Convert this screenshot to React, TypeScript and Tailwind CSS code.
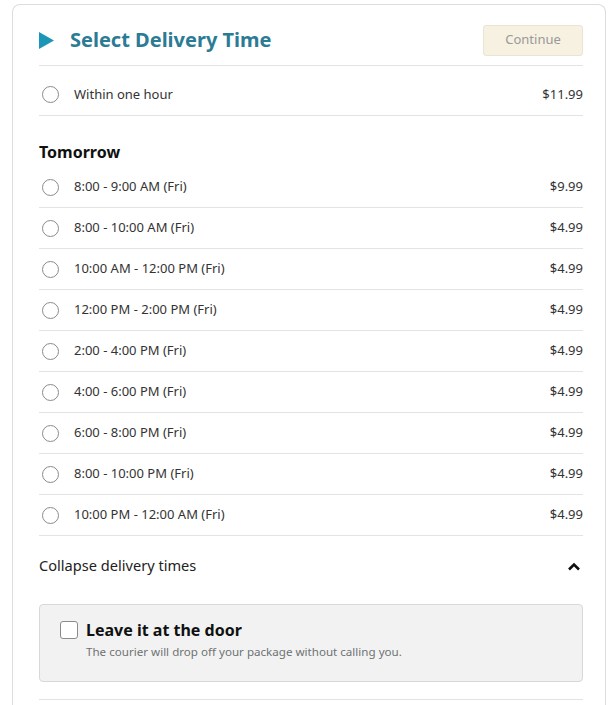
import { useState } from "react";

const SLOTS = [
  { label: "8:00 - 9:00 AM (Fri)", price: "$9.99" },
  { label: "8:00 - 10:00 AM (Fri)", price: "$4.99" },
  { label: "10:00 AM - 12:00 PM (Fri)", price: "$4.99" },
  { label: "12:00 PM - 2:00 PM (Fri)", price: "$4.99" },
  { label: "2:00 - 4:00 PM (Fri)", price: "$4.99" },
  { label: "4:00 - 6:00 PM (Fri)", price: "$4.99" },
  { label: "6:00 - 8:00 PM (Fri)", price: "$4.99" },
  { label: "8:00 - 10:00 PM (Fri)", price: "$4.99" },
  { label: "10:00 PM - 12:00 AM (Fri)", price: "$4.99" },
];

function Radio({ checked }: { checked: boolean }) {
  return (
    <span
      className={`w-[17px] h-[17px] rounded-full border bg-white shrink-0 flex items-center justify-center ${
        checked ? "border-[#007185]" : "border-[#888c8c]"
      }`}
    >
      {checked && <span className="w-[7px] h-[7px] rounded-full bg-[#007185]" />}
    </span>
  );
}

export default function App() {
  const [selected, setSelected] = useState<string | null>(null);
  const [leave, setLeave] = useState(false);

  return (
    <div
      className="min-h-[705px] bg-white pt-[4px] pl-[12px] pr-[7px] text-[#333333]"
      style={{ fontFamily: '"Noto Sans", "Open Sans", Arial, sans-serif' }}
    >
      <div className="border border-[#dddddd] rounded-t-[8px] border-b-0 pl-[26px] pr-[22px] pb-[5px]">
        {/* Header */}
        <div className="h-[61px] pt-[10px] flex items-center justify-between border-b border-[#e3e3e3]">
          <div className="flex items-center gap-[16px]">
            <svg width="15" height="17" viewBox="0 0 15 17" className="mt-[1px]">
              <polygon points="0,0 15,8.5 0,17" fill="#1c96b7" />
            </svg>
            <h2 className="text-[20px] font-bold text-[#2b7b95]">
              Select Delivery Time
            </h2>
          </div>
          <button className="w-[100px] h-[31px] rounded-[3px] border border-[#ece4d0] bg-[#f7f1e1] text-[13px] text-[#999999]">
            Continue
          </button>
        </div>

        {/* Within one hour */}
        <label
          className="h-[50px] pt-[8px] flex items-center border-b border-[#e3e3e3] cursor-pointer"
          onClick={() => setSelected("hour")}
        >
          <span className="ml-[3px]">
            <Radio checked={selected === "hour"} />
          </span>
          <span className="ml-[15px] text-[13px] flex-1">Within one hour</span>
          <span className="text-[13px]">$11.99</span>
        </label>

        <h3 className="text-[16px] font-bold text-[#0f1111] mt-[25px] mb-[4px] leading-[22px]">Tomorrow</h3>

        {SLOTS.map((s) => (
          <label
            key={s.label}
            className="h-[41px] flex items-center border-b border-[#e3e3e3] cursor-pointer"
            onClick={() => setSelected(s.label)}
          >
            <span className="ml-[3px]">
              <Radio checked={selected === s.label} />
            </span>
            <span className="ml-[15px] text-[13px] flex-1">{s.label}</span>
            <span className="text-[13px]">{s.price}</span>
          </label>
        ))}

        {/* Collapse */}
        <div className="h-[60px] flex items-center justify-between">
          <span className="text-[14.6px] text-[#222222]">Collapse delivery times</span>
          <svg width="14" height="9" viewBox="0 0 14 9" className="mr-[2px]">
            <path d="M2 7.5 L7 2.5 L12 7.5" fill="none" stroke="#0f1111" strokeWidth="2.6" />
          </svg>
        </div>

        {/* Leave at door */}
        <div className="mt-[8px] h-[78px] rounded-[4px] border border-[#d5d9d9] bg-[#f2f2f2] pl-[20px] pt-[15px]">
          <label className="flex items-center gap-[8px] cursor-pointer" onClick={() => setLeave(!leave)}>
            <span
              className={`w-[18px] h-[18px] rounded-[3px] border bg-white flex items-center justify-center ${
                leave ? "border-[#007185]" : "border-[#888c8c]"
              }`}
            >
              {leave && (
                <svg width="12" height="12" viewBox="0 0 12 12">
                  <path d="M2 6 L5 9 L10 3" fill="none" stroke="#007185" strokeWidth="2" />
                </svg>
              )}
            </span>
            <span className="text-[16px] font-bold text-[#0f1111] leading-[20px]">Leave it at the door</span>
          </label>
          <p className="ml-[26px] mt-[3px] text-[11.6px] text-[#6f7373]">
            The courier will drop off your package without calling you.
          </p>
        </div>

        <div className="mt-[17px] border-b border-[#e3e3e3]" />
      </div>
    </div>
  );
}
